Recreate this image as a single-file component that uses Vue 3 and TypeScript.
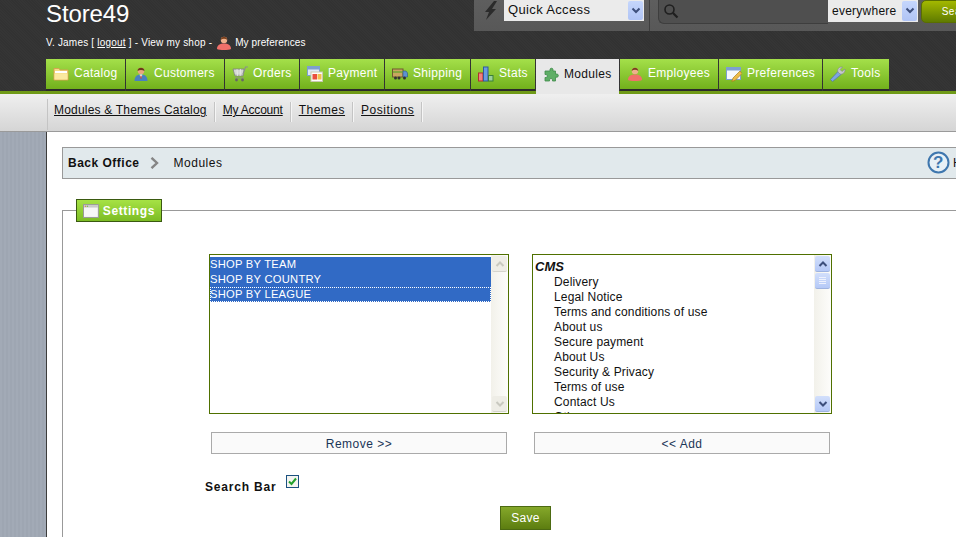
<script setup lang="ts">
interface Tab { label: string; width: number; icon: string; active?: boolean }
const tabs: Tab[] = [
  { label: 'Catalog', width: 79, icon: 'folder' },
  { label: 'Customers', width: 98, icon: 'customer' },
  { label: 'Orders', width: 74, icon: 'cart' },
  { label: 'Payment', width: 84, icon: 'payment' },
  { label: 'Shipping', width: 85, icon: 'truck' },
  { label: 'Stats', width: 64, icon: 'stats' },
  { label: 'Modules', width: 83, icon: 'puzzle', active: true },
  { label: 'Employees', width: 98, icon: 'employee' },
  { label: 'Preferences', width: 103, icon: 'prefs' },
  { label: 'Tools', width: 66, icon: 'tools' },
]
const subLinks = ['Modules & Themes Catalog', 'My Account', 'Themes', 'Positions']
const selected = ['SHOP BY TEAM', 'SHOP BY COUNTRY', 'SHOP BY LEAGUE']
const cmsPages = ['Delivery', 'Legal Notice', 'Terms and conditions of use', 'About us', 'Secure payment', 'About Us', 'Security & Privacy', 'Terms of use', 'Contact Us', 'Other']
</script>

<template>
  <div class="root">
    <header class="header">
      <div class="top">
        <div class="brand">
          <div class="shop">Store49</div>
          <div class="userline">
            <span>V. James [ <u>logout</u> ] - View my shop -</span>
            <svg class="mini" viewBox="0 0 16 16" width="16" height="16"><circle cx="8" cy="5" r="3.200" fill="#eeb08c"/><path d="M4.700 5C5 .8 11 .8 11.300 5 9.500 3.300 6.500 3.300 4.700 5z" fill="#7a3f1c"/><path d="M1 14c0-4 3-5.500 7-5.500s7 1.500 7 5.500c-2 1.300-12 1.300-14 0z" fill="#f0706a"/></svg>
            <span class="prefs">My preferences</span>
          </div>
        </div>
        <div class="tools">
          <svg class="bolt" viewBox="0 0 14 20" width="14" height="20"><path d="M10 0 1 11h4l-3 8 10-11H8l5-8z" fill="#2b2b2b"/></svg>
          <div class="fake-select quick">
            <span class="quick-label">Quick Access</span>
            <span class="arrow"><svg viewBox="0 0 10 8" width="10" height="8"><path d="M1.500 1.500 5 5l3.500-3.500" fill="none" stroke="#3d4f7c" stroke-width="2"/></svg></span>
          </div>
          <div class="divider"></div>
          <div class="search">
            <svg viewBox="0 0 16 16" width="16" height="16"><circle cx="6.500" cy="6.500" r="4.500" fill="none" stroke="#1f1f1f" stroke-width="1.600"/><path d="M10 10l4.500 4.500" stroke="#1f1f1f" stroke-width="2.200"/></svg>
          </div>
          <div class="fake-select where">
            <span>everywhere</span>
            <span class="arrow"><svg viewBox="0 0 10 8" width="10" height="8"><path d="M1.500 1.500 5 5l3.500-3.500" fill="none" stroke="#3d4f7c" stroke-width="2"/></svg></span>
          </div>
          <button class="search-btn">Search</button>
        </div>
      </div>
      <nav class="tabs">
        <a v-for="t in tabs" :key="t.label" class="tab" :class="{ active: t.active }" :style="{ width: t.width + 'px' }">
          <svg class="tab-icon" viewBox="0 0 16 16" width="16" height="16">
            <template v-if="t.icon === 'folder'">
              <path d="M1 2.500h5l1 1.500h8v10H1z" fill="#f6dd86" stroke="#d8a050" stroke-width=".9"/>
              <path d="M2 5h12v2H2z" fill="#fff"/>
              <path d="M1.500 7.500h13V13.500h-13z" fill="#fbe9a0"/>
            </template>
            <template v-else-if="t.icon === 'customer'">
              <circle cx="8" cy="5" r="3.200" fill="#e9a77f"/>
              <path d="M4.500 5C4.500 .6 11.500 .6 11.500 5 9.500 3.500 6.500 3.500 4.500 5z" fill="#6e3a1a"/>
              <path d="M1.500 15c0-4.500 2.500-6.500 6.500-6.500s6.500 2 6.500 6.500z" fill="#4a80bf"/>
              <path d="M6.500 8.500h3l-1.500 3.500z" fill="#fff"/>
              <path d="M7.500 9.500h1l.3 3h-1.600z" fill="#c84a3a"/>
            </template>
            <template v-else-if="t.icon === 'cart'">
              <path d="M1 3h11l-1 7H3z" fill="#c6cac6" stroke="#7d827d" stroke-width=".8"/>
              <path d="M2 5h10M2.500 7h9M5 3l.5 7M8.500 3l-.3 7" stroke="#eef0ee" stroke-width=".7"/>
              <path d="M11 8l2.500-7H16M3 12h9" stroke="#8a8f8a" stroke-width="1.200" fill="none"/>
              <circle cx="4.500" cy="14" r="1.400" fill="#666"/><circle cx="10.500" cy="14" r="1.400" fill="#666"/>
            </template>
            <template v-else-if="t.icon === 'payment'">
              <rect x="0.500" y="0.500" width="12" height="9" fill="#dfe8f5" stroke="#7d9fd0"/>
              <path d="M1 1h11v2.500H1z" fill="#7d9fd0"/>
              <rect x="4" y="6" width="11.500" height="9.500" fill="#fdfdf8" stroke="#c9c9b0"/>
              <rect x="5.500" y="8" width="4.500" height="5.500" fill="#ea4f3e"/>
              <rect x="10.500" y="8" width="4" height="5.500" fill="#f2c04e"/>
            </template>
            <template v-else-if="t.icon === 'truck'">
              <rect x="0.500" y="3" width="10.500" height="8" fill="#c9a660" stroke="#6e5a30"/>
              <path d="M1 6h10" stroke="#7fa83a" stroke-width="1.800"/>
              <path d="M11 5h3l1.500 2v4H11z" fill="#5d92d0" stroke="#2f5687" stroke-width=".6"/>
              <circle cx="3.500" cy="12" r="1.500" fill="#333"/><circle cx="7" cy="12" r="1.500" fill="#333"/><circle cx="12.500" cy="12" r="1.500" fill="#333"/>
            </template>
            <template v-else-if="t.icon === 'stats'">
              <rect x="0.500" y="7" width="4.500" height="8" fill="#f08080" stroke="#b03030"/>
              <rect x="5.500" y="1" width="4.500" height="14" fill="#6a9ce0" stroke="#2f5aa0"/>
              <rect x="10.500" y="9.500" width="4.500" height="5.500" fill="#9ccf9c" stroke="#3a803a"/>
            </template>
            <template v-else-if="t.icon === 'puzzle'">
              <path d="M5 4h2V2.500C7 .8 10 .8 10 2.500V4h2.500v3H14c1.800 0 1.800 3.200 0 3.200h-1.500V14H9.500v-1.300c0-1.600-3-1.600-3 0V14H2v-3.500h1.200c1.600 0 1.600-3 0-3H2V4z" fill="#5fae66" stroke="#3f8a4a" stroke-width=".8"/>
            </template>
            <template v-else-if="t.icon === 'employee'">
              <circle cx="8" cy="5" r="3.200" fill="#eeb08c"/>
              <path d="M4.700 5C5 .8 11 .8 11.300 5 9.500 3.300 6.500 3.300 4.700 5z" fill="#7a3f1c"/>
              <path d="M1 14c0-4 3-5.500 7-5.500s7 1.500 7 5.500c-2 1.300-12 1.300-14 0z" fill="#f0706a"/>
            </template>
            <template v-else-if="t.icon === 'prefs'">
              <rect x="0.500" y="1.500" width="14" height="12" fill="#f6f8fc" stroke="#7d9fd0"/>
              <path d="M1 2h13v2.500H1z" fill="#7d9fd0"/>
              <path d="M14 5 7 12l-1.200 3.500 3.500-1.200L16 7.500z" fill="#eebb4a" stroke="#a87f20" stroke-width=".7"/>
            </template>
            <template v-else-if="t.icon === 'tools'">
              <path d="M2.500 15.500.5 13.500 8 5.500l3 3z" fill="#7fa4e2" stroke="#4a6fb0" stroke-width=".6"/>
              <path d="M8 6c-1-3 1-5.500 4.500-5L10 3.500 12 5.500l3-2.500c.5 3-2 5.800-5 5z" fill="#c6c9ce" stroke="#85888e" stroke-width=".6"/>
            </template>
          </svg>
          <span class="tab-label">{{ t.label }}</span>
        </a>
      </nav>
      <div class="subnav">
        <a v-for="l in subLinks" :key="l" class="sublink"><u>{{ l }}</u></a>
      </div>
    </header>

    <div class="body">
      <aside class="side"></aside>
      <main class="main">
        <div class="crumbs">
          <strong>Back Office</strong>
          <svg class="chev" viewBox="0 0 9 12" width="9" height="12"><path d="M1.500 .8 7 6l-5.500 5.200" fill="none" stroke="#858585" stroke-width="2.400"/></svg>
          <span class="crumb-here">Modules</span>
          <span class="help">
            <svg viewBox="0 0 23 23" width="23" height="23"><circle cx="11.500" cy="11.500" r="10" fill="#e8f0f6" stroke="#3f77ae" stroke-width="2"/><text x="11.500" y="17" text-anchor="middle" class="q">?</text></svg>
            <span>Help</span>
          </span>
        </div>
        <fieldset class="settings">
          <legend class="legend">
            <svg viewBox="0 0 16 14" width="16" height="14"><rect x=".5" y=".5" width="15" height="13" fill="#f7f7f7" stroke="#9a9a9a"/><path d="M1 1h14v2.500H1z" fill="#c9c9c9"/><circle cx="2.500" cy="2.200" r=".7" fill="#d84"/><circle cx="4.500" cy="2.200" r=".7" fill="#7b4"/></svg>
            <span class="legend-text">Settings</span>
          </legend>
          <div class="form">
            <div class="lists">
              <div class="col">
                <div class="listbox">
                  <div class="items">
                    <div v-for="(s, i) in selected" :key="s" class="opt sel" :class="{ focus: i === 2 }">{{ s }}</div>
                  </div>
                  <div class="bar off">
                    <span class="sb-btn"><svg viewBox="0 0 10 8" width="10" height="8"><path d="M1.500 6 5 2.500 8.500 6" fill="none" stroke="#c9c9c0" stroke-width="2"/></svg></span>
                    <span class="sb-fill"></span>
                    <span class="sb-btn"><svg viewBox="0 0 10 8" width="10" height="8"><path d="M1.500 2 5 5.500 8.500 2" fill="none" stroke="#c9c9c0" stroke-width="2"/></svg></span>
                  </div>
                </div>
                <button class="move">Remove &gt;&gt;</button>
              </div>
              <div class="col">
                <div class="listbox">
                  <div class="items">
                    <div class="opt group">CMS</div>
                    <div v-for="p in cmsPages" :key="p" class="opt child">{{ p }}</div>
                  </div>
                  <div class="bar">
                    <span class="sb-btn"><svg viewBox="0 0 10 8" width="10" height="8"><path d="M1.500 6 5 2.500 8.500 6" fill="none" stroke="#3d4f7c" stroke-width="2"/></svg></span>
                    <span class="sb-btn thumb"><svg viewBox="0 0 7 8" width="7" height="8"><path d="M0 .5h7M0 2.500h7M0 4.500h7M0 6.500h7" stroke="#eef2fd" stroke-width="1"/></svg></span>
                    <span class="sb-fill"></span>
                    <span class="sb-btn"><svg viewBox="0 0 10 8" width="10" height="8"><path d="M1.500 2 5 5.500 8.500 2" fill="none" stroke="#3d4f7c" stroke-width="2"/></svg></span>
                  </div>
                </div>
                <button class="move">&lt;&lt; Add</button>
              </div>
            </div>
            <div class="searchbar">
              <label>Search Bar</label>
              <span class="check"><svg viewBox="0 0 11 11" width="11" height="11"><path d="M2 5.500 4.500 8 9 2.500" fill="none" stroke="#22a02c" stroke-width="2"/></svg></span>
            </div>
            <button class="save">Save</button>
          </div>
        </fieldset>
      </main>
    </div>
  </div>
</template>

<style>
html, body { margin: 0; overflow: hidden; }
</style>

<style scoped>
.root { width: 956px; height: 537px; overflow: hidden; font-family: "Liberation Sans", Arial, sans-serif; font-size: 12px; letter-spacing: .5px; color: #111; }
.header { background: #333 repeating-linear-gradient(45deg, #353535 0 1px, #323232 1px 2px); }
.top { display: flex; align-items: flex-start; height: 59px; padding-left: 46px; }
.brand { width: 428px; flex: none; color: #fff; }
.shop { font-size: 24px; line-height: 28px; height: 32px; letter-spacing: -.1px; }
.userline { display: flex; align-items: center; font-size: 10px; letter-spacing: .2px; line-height: 16px; margin-top: 3px; }
.mini { margin: 0 3px 0 4px; }
.prefs { letter-spacing: .1px; }
.tools { flex: none; width: 482px; height: 31px; display: flex; align-items: flex-start; background: linear-gradient(#5e5e5e, #585858); }
.bolt { margin: 1px 6px 0 10px; flex: none; }
.fake-select { position: relative; background: #ebebeb; color: #111; display: flex; align-items: center; flex: none; box-sizing: border-box; }
.quick { width: 140px; height: 21px; padding-left: 4px; font-size: 13px; letter-spacing: .35px; }
.quick-label { margin-top: -2px; }
.where { width: 90px; height: 22px; padding-left: 4px; font-size: 12px; letter-spacing: .25px; }
.arrow { position: absolute; right: 1px; top: 1px; bottom: 1px; width: 15px; background: linear-gradient(#c5d6fc, #b0c4f5); border-radius: 2px; display: flex; align-items: center; justify-content: center; }
.divider { width: 1px; height: 31px; margin: 0 8px 0 5px; background: #3f3f3f; flex: none; }
.search { width: 170px; height: 24px; box-sizing: border-box; flex: none; background: #4f4f4f; border: 1px solid #3e3e3e; border-top: 0; border-right: 0; border-radius: 0 0 0 6px; padding: 3px 0 0 4px; }
.search svg { display: block; }
.search-btn { flex: none; width: 76px; height: 23px; margin-left: 3px; border: 1px solid #5a6e00; border-radius: 5px; background: linear-gradient(#a3b800, #5f7b00); color: #fff; font: 10px "Liberation Sans", Arial, sans-serif; letter-spacing: .5px; padding: 0; }
.tabs { display: flex; gap: 1px; height: 32px; padding-left: 46px; border-bottom: 3px solid #6f9a17; }
.tab { box-sizing: border-box; height: 32px; padding: 0 0 3px 7px; display: flex; align-items: center; gap: 5px; flex: none; color: #fff; background: linear-gradient(#a4e04a, #72b01c) padding-box; border-bottom: 2px solid #2a2a2a; letter-spacing: .3px; }
.tab-icon { flex: none; margin-top: 2px; }
.tab.active { height: 35px; border-bottom: 0; padding-bottom: 6px; background: #e8e8e8; color: #111; }
.subnav { height: 38px; box-sizing: border-box; padding: 8px 0 0 47px; display: flex; align-items: flex-start; background: linear-gradient(#efefef, #d5d5d5); border-bottom: 1px solid #9a9a9a; position: relative; }
.subnav::before { content: ""; position: absolute; left: 47px; top: 5px; bottom: 1px; width: 1px; background: #c4c4c4; }
.sublink { height: 20px; line-height: 17px; padding: 0 7px; margin-left: 1px; border-right: 1px solid #c4c4c4; box-shadow: 1px 0 0 #f5f5f5; color: #111; }
.sublink:nth-child(1) { padding-left: 6px; letter-spacing: .2px; }
.sublink:nth-child(2) { letter-spacing: -.2px; }
.body { display: flex; height: 405px; }
.side { width: 46px; flex: none; border-right: 1px solid #3c3c3c; background: #a0a8b4 repeating-linear-gradient(90deg, #a2aab6 0 2px, #9ea6b2 2px 4px); }
.main { flex: none; width: 1000px; padding: 15px 0 0 15px; background: #fff; box-sizing: border-box; }
.crumbs { width: 960px; height: 32px; box-sizing: border-box; display: flex; align-items: center; padding-left: 5px; background: #e1e9ec; border: 1px solid #999; position: relative; }
.chev { margin: 0 15px 0 10px; }
.help { position: absolute; left: 864px; top: 3px; display: flex; align-items: center; gap: 3px; }
.q { font: bold 17px "Liberation Sans", Arial, sans-serif; fill: #3f77ae; }
.settings { width: 960px; margin: 20px 0 0; padding: 0; border: 1px solid #999; box-sizing: border-box; height: 400px; min-width: 0; }
.legend { margin-left: 13px; padding: 0 6px; height: 23px; box-sizing: border-box; width: 86px; display: flex; align-items: center; gap: 4px; background: linear-gradient(#a6e245, #7cbc24); border: 1px solid #3a5a10; color: #fff; font-weight: bold; letter-spacing: .6px; }
.legend-text { margin-top: 1px; }
.form { padding: 32px 0 0 142px; }
.lists { display: flex; gap: 23px; margin-left: 4px; }
.col { width: 300px; display: flex; flex-direction: column; align-items: center; }
.listbox { width: 300px; height: 160px; box-sizing: border-box; border: 1px solid #4f7000; display: flex; background: #fff; overflow: hidden; }
.items { flex: 1; min-width: 0; padding: 2px 0 0; line-height: 15px; letter-spacing: .15px; }
.opt { height: 15px; white-space: nowrap; box-sizing: border-box; }
.sel { background: #316ac5; color: #fff; font-size: 11.200px; letter-spacing: .25px; }
.sel.focus { outline: 1px dotted #fff; outline-offset: -1px; }
.group { font-weight: bold; font-style: italic; font-size: 13px; padding-left: 2px; letter-spacing: 0; height: 13px; line-height: 20px; margin-bottom: 5px; }
.child { padding-left: 21px; }
.bar { width: 17px; flex: none; display: flex; flex-direction: column; background: linear-gradient(90deg, #f2f1ea, #fdfdfb); padding: 1px 0; box-sizing: border-box; }
.sb-fill { flex: 1; }
.sb-btn { height: 16px; width: 15px; margin: 0 1px; border-radius: 2px; display: flex; align-items: center; justify-content: center; background: linear-gradient(#d2dffb, #b5c9f7); border-bottom: 1px solid #9eb3e0; box-sizing: border-box; }
.sb-btn.thumb { height: 16px; margin-top: 1px; }
.off .sb-btn { background: #eeede6; border-bottom-color: #d5d4cc; }
.move { width: 296px; height: 22px; margin-top: 18px; background: #fafafa; border: 1px solid #aaa; color: #1a3557; font: 12px "Liberation Sans", Arial, sans-serif; letter-spacing: .5px; padding: 1px 0 0; }
.searchbar { display: flex; align-items: flex-start; margin-top: 21px; height: 31px; }
.searchbar label { font-weight: bold; margin-top: 5px; letter-spacing: .8px; }
.check { margin-left: 10px; width: 13px; height: 13px; box-sizing: border-box; border: 1px solid #1c5180; background: #f4f4f0; display: flex; align-items: center; justify-content: center; }
.save { display: block; margin-left: 295px; width: 51px; height: 24px; padding: 0; border: 1px solid #4c6a12; background: linear-gradient(#85a82a, #5c7d10); color: #fff; font: 12px "Liberation Sans", Arial, sans-serif; letter-spacing: .3px; }
</style>
